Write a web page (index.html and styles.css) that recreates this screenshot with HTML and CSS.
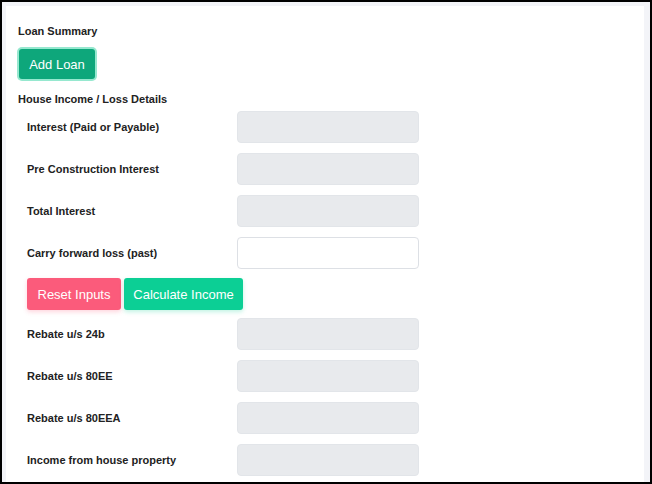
FILE: index.html
```html
<!DOCTYPE html>
<html lang="en">
<head>
    <meta charset="UTF-8">
    <meta name="viewport" content="width=device-width, initial-scale=1.0">
    <title>House Property Income</title>
    <link rel="stylesheet" href="styles.css">
</head>
<body>
    <div class="card">
        <h3>Loan Summary</h3>
        <button type="button" class="btn btn-add">Add Loan</button>

        <h3>House Income / Loss Details</h3>
        <div class="fields">
            <div class="row">
                <label>Interest (Paid or Payable)</label>
                <input type="text" readonly>
            </div>
            <div class="row">
                <label>Pre Construction Interest</label>
                <input type="text" readonly>
            </div>
            <div class="row">
                <label>Total Interest</label>
                <input type="text" readonly>
            </div>
            <div class="row">
                <label>Carry forward loss (past)</label>
                <input type="text" class="editable">
            </div>

            <div class="actions">
                <button type="button" class="btn btn-reset">Reset Inputs</button>
                <button type="button" class="btn btn-calc">Calculate Income</button>
            </div>

            <div class="row">
                <label>Rebate u/s 24b</label>
                <input type="text" readonly>
            </div>
            <div class="row">
                <label>Rebate u/s 80EE</label>
                <input type="text" readonly>
            </div>
            <div class="row">
                <label>Rebate u/s 80EEA</label>
                <input type="text" readonly>
            </div>
            <div class="row">
                <label>Income from house property</label>
                <input type="text" readonly>
            </div>
        </div>
    </div>
</body>
</html>
```

FILE: styles.css
```css
* {
    box-sizing: border-box;
}
html, body {
    height: 100%;
}
body {
    font-family: Arial, "Liberation Sans", sans-serif;
    background-color: #f3f4f8;
    margin: 0;
    padding: 4px 6px 0 4px;
    border: 2px solid #000;
    overflow: hidden;
}
.card {
    background: #fff;
    height: 100%;
    padding: 18px 12px;
}
h3 {
    font-size: 11px;
    font-weight: bold;
    color: #222;
    margin: 0;
    line-height: 14px;
}
.btn {
    font-family: inherit;
    font-size: 13px;
    color: #fff;
    border: none;
    border-radius: 3px;
    cursor: pointer;
    height: 32px;
    padding: 0;
    white-space: nowrap;
}
.btn-add {
    background-color: #0ea77b;
    width: 76px;
    height: 30px;
    margin: 11px 0 13px 1px;
    box-shadow: 0 0 0 2px #96e8cf;
}
.fields {
    padding-left: 9px;
    margin-top: 5px;
}
.row {
    display: flex;
    align-items: center;
    height: 32px;
    margin-bottom: 10px;
}
.row label {
    width: 210px;
    font-size: 11px;
    font-weight: bold;
    color: #222;
}
.row input {
    width: 182px;
    height: 32px;
    border: 1px solid #e2e5e9;
    border-radius: 4px;
    background-color: #e8eaed;
}
.row input.editable {
    background-color: #fff;
    border-color: #dde0e5;
}
.actions {
    display: flex;
    gap: 3px;
    margin: -1px 0 8px;
}
.btn-reset {
    background-color: #fb5b7b;
    width: 94px;
    box-shadow: 0 2px 4px rgba(251, 91, 123, 0.25);
}
.btn-calc {
    background-color: #0ccf95;
    width: 119px;
    box-shadow: 0 2px 4px rgba(12, 207, 149, 0.25);
}
```
